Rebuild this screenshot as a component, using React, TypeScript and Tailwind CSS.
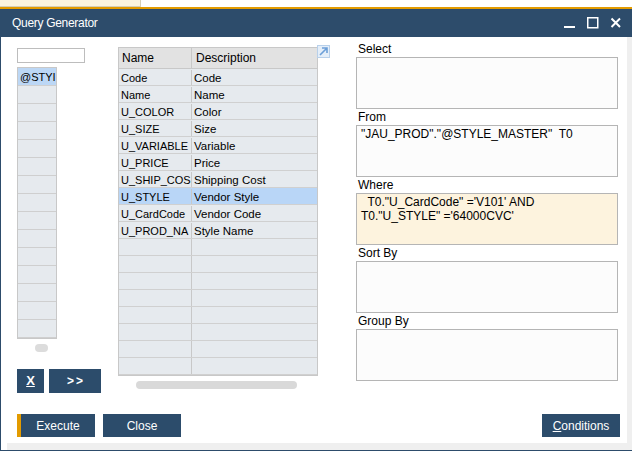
import React from "react"

const FONT = { fontFamily: '"Liberation Sans", Arial, sans-serif' }

// names are shown as the grid clips them
const FIELDS: [string, string][] = [
  ["Code", "Code"],
  ["Name", "Name"],
  ["U_COLOR", "Color"],
  ["U_SIZE", "Size"],
  ["U_VARIABLE", "Variable"],
  ["U_PRICE", "Price"],
  ["U_SHIP_COS", "Shipping Cost"],
  ["U_STYLE", "Vendor Style"],
  ["U_CardCode", "Vendor Code"],
  ["U_PROD_NA", "Style Name"],
]

function TitleBar() {
  return (
    <div className="h-[28px] bg-[#2d4c6b] flex items-center pl-[11px] pr-[10px] text-white">
      <span className="text-[12px] tracking-[-0.3px]">Query Generator</span>
      <div className="ml-auto flex items-center gap-[11px]">
        <svg width="12" height="12" viewBox="0 0 12 12">
          <rect x="0" y="9" width="11" height="2" fill="white" />
        </svg>
        <svg width="12" height="12" viewBox="0 0 12 12">
          <rect x="0.75" y="0.75" width="10" height="10" fill="none" stroke="white" strokeWidth="1.5" />
        </svg>
        <svg width="12" height="12" viewBox="0 0 12 12">
          <path d="M1.5 1.5 L10 10 M10 1.5 L1.5 10" stroke="white" strokeWidth="2" />
        </svg>
      </div>
    </div>
  )
}

function TableList() {
  return (
    <div className="flex flex-col">
      <div className="mt-[11px] w-[68px] h-[15px] border border-[#bdbdbd] bg-white" />
      <div className="mt-[4px] w-[40px] h-[272px] border border-[#c8c8c8] bg-[#e6eaee] overflow-hidden">
        {Array.from({ length: 15 }).map((_, i) => (
          <div
            key={i}
            className={
              "h-[18px] border-b border-[#cfcfcf] whitespace-nowrap overflow-hidden pl-[2px] pt-[1px] text-[11px] leading-[17px] text-black " +
              (i === 0 ? "bg-[#bcd7f5]" : "")
            }
          >
            {i === 0 ? "@STYI" : ""}
          </div>
        ))}
      </div>
      <div className="mt-[5px] ml-[18px] w-[13px] h-[8px] rounded-full bg-[#dcdcdc]" />
      <div className="mt-[17px] flex gap-[5px]">
        <button className="w-[27px] h-[24px] bg-[#2c4c6b] text-white text-[13px] font-bold underline">X</button>
        <button className="w-[52px] h-[24px] bg-[#2c4c6b] text-white text-[12px] font-bold tracking-[2px] pl-[2px]">&gt;&gt;</button>
      </div>
    </div>
  )
}

function FieldTable() {
  const empty = 18 - FIELDS.length
  return (
    <div className="flex items-start">
      <div className="flex flex-col">
        <div className="mt-[10px] w-[200px] h-[329px] border border-[#c8c8c8] bg-[#e6eaee] overflow-hidden text-[11.5px] text-black">
          <div className="flex h-[21px] bg-[#e2e2e2] border-b border-[#c8c8c8] leading-[20px] text-[12px]">
            <div className="w-[73px] pl-[3px] border-r border-[#c8c8c8]">Name</div>
            <div className="flex-1 pl-[4px]">Description</div>
          </div>
          {FIELDS.map(([n, d]) => (
            <div
              key={n}
              className={"flex h-[17px] border-b border-[#d0d0d0] leading-[16px] pt-[1px] " + (n === "U_STYLE" ? "bg-[#b9d6f7]" : "")}
            >
              <div className="w-[73px] pl-[2px] border-r border-[#c8c8c8] whitespace-nowrap overflow-hidden text-[11px]">{n}</div>
              <div className="flex-1 pl-[2px] whitespace-nowrap overflow-hidden">{d}</div>
            </div>
          ))}
          {Array.from({ length: empty }).map((_, i) => (
            <div key={i} className="flex h-[17px] border-b border-[#d0d0d0]">
              <div className="w-[73px] border-r border-[#c8c8c8]" />
              <div className="flex-1" />
            </div>
          ))}
        </div>
        <div className="mt-[5px] ml-[18px] w-[161px] h-[8px] rounded-full bg-[#d9d9d9]" />
      </div>
      <svg className="mt-[8px] -ml-[1px]" width="13" height="13" viewBox="0 0 13 13">
        <rect x="0.5" y="0.5" width="12" height="12" fill="#e4eef9" stroke="#b8d0ea" />
        <path d="M3 10 L10 3 M5 3 H10 V8" fill="none" stroke="#6c9fd8" strokeWidth="1.6" />
      </svg>
    </div>
  )
}

function ClauseBox({ label, text, warm }: { label: string; text?: string; warm?: boolean }) {
  return (
    <div className="flex flex-col">
      <div className="h-[16px] leading-[17px] text-[12px] text-black pl-[2px]">{label}</div>
      <div
        className={
          "h-[52px] border border-[#b5b5b5] px-[4px] pt-[1px] text-[12px] leading-[14px] text-black whitespace-pre " +
          (warm ? "bg-[#fdf3de]" : "bg-[#fcfcfc]")
        }
      >
        {text}
      </div>
    </div>
  )
}

function Clauses() {
  return (
    <div className="ml-[26px] w-[262px] pt-[4px] flex flex-col">
      <ClauseBox label="Select" />
      <ClauseBox label="From" text={'"JAU_PROD"."@STYLE_MASTER"  T0'} />
      <ClauseBox label="Where" warm text={'  T0."U_CardCode" =\'V101\' AND\nT0."U_STYLE" =\'64000CVC\''} />
      <ClauseBox label="Sort By" />
      <ClauseBox label="Group By" />
    </div>
  )
}

function ActionButton({ children, accent }: { children: React.ReactNode; accent?: boolean }) {
  return (
    <button className="w-[78px] h-[23px] flex bg-[#2c4c6b] text-white text-[12px]">
      {accent && <span className="w-[4px] h-full bg-[#e39b00]" />}
      <span className="flex-1 flex items-center justify-center">{children}</span>
    </button>
  )
}

export default function App() {
  return (
    <div className="w-[632px] h-[460px] bg-white overflow-hidden flex flex-col" style={FONT}>
      {/* strip behind the window */}
      <div className="h-[7px] flex">
        <div className="w-[141px] h-full bg-[#fbf4df] border-r border-b border-[#d6cfb8]" />
      </div>
      <div className="h-[2px] bg-[#e39b00]" />

      <div className="w-[632px] border-l border-b border-[#2d4c6b] flex flex-col">
        <TitleBar />
        <div className="flex">
          <div className="flex-1 h-[406px] bg-white flex flex-col">
            <div className="flex-1 flex pl-[16px]">
              <TableList />
              <div className="ml-[17px]">
                <FieldTable />
              </div>
              <Clauses />
            </div>
            <div className="h-[23px] mb-[6px] flex pl-[16px] pr-[7px]">
              <ActionButton accent>Execute</ActionButton>
              <div className="ml-[8px]">
                <ActionButton>Close</ActionButton>
              </div>
              <div className="ml-auto">
                <ActionButton>
                  <span className="underline">C</span>onditions
                </ActionButton>
              </div>
            </div>
          </div>
          <div className="w-[5px] bg-[#efefef]" />
        </div>
        <div className="h-[7px] ml-[6px] bg-[#efefef]" />
      </div>
    </div>
  )
}
